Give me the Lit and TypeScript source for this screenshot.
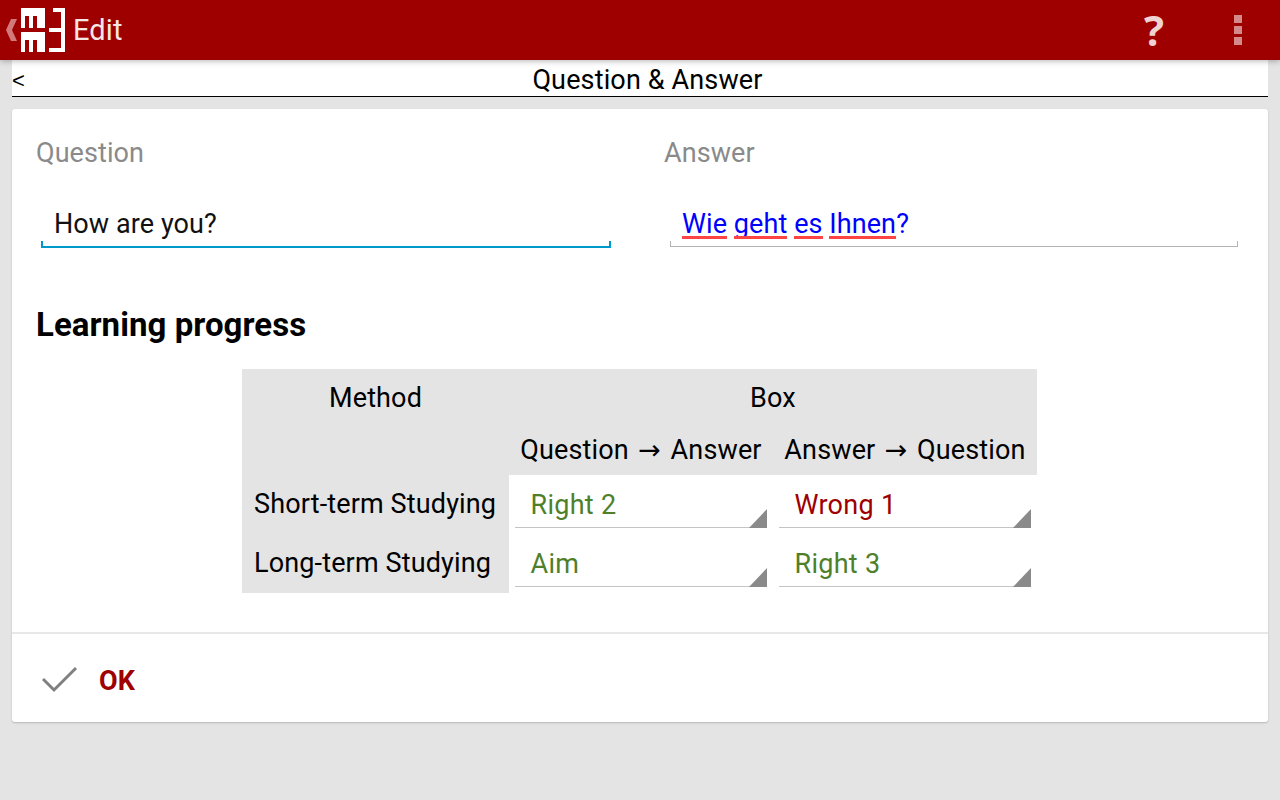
import { LitElement, html, css } from "lit";
import { customElement } from "lit/decorators.js";

@customElement("app-root")
export class AppRoot extends LitElement {
  static styles = css`
    :host { display: block; width: 1280px; height: 800px; background: #e4e4e4; font-family: Roboto, "Noto Sans", sans-serif; overflow: hidden; color: #000; letter-spacing: .14px; }
    .bar { height: 60px; background: #9e0000; display: flex; align-items: center; color: #f6e6e6; position: relative; z-index: 2; box-shadow: 0 1px 6px rgba(0,0,0,.3); }
    .back { width: 21px; height: 60px; flex: none; display: block; }
    .logo { width: 44px; height: 44px; flex: none; display: block; }
    .title { font-size: 29px; margin-left: 8px; flex: 1; line-height: 64px; }
    .help { font-family: "Open Sans", sans-serif; font-weight: 700; font-size: 42px; color: #f0d2d2; width: 56px; text-align: center; margin-right: 52px; line-height: 60px; }
    .dots { width: 8px; margin-right: 38px; display: flex; flex-direction: column; gap: 3px; }
    .dots i { display: block; height: 8px; background: #d48a8a; }
    .sub { margin: 0 12px; padding: 4px 0 0 15px; height: 32px; background: #fff; border-bottom: 1px solid #000; position: relative; display: flex; align-items: center; justify-content: center; font-size: 27px; }
    .lt { position: absolute; left: 0; top: 3px; line-height: 36px; font-family: "Liberation Sans", sans-serif; font-size: 22px; }
    .card { margin: 12px 12px 0; height: 613px; background: #fff; border-radius: 3px; box-shadow: 0 1px 2px rgba(0,0,0,.2); display: flex; flex-direction: column; }
    .body { height: 523px; padding: 0 24px; border-bottom: 2px solid #e8e8e8; }
    .fields { display: grid; grid-template-columns: 628px 1fr; }
    .label { font-size: 27px; color: #8a8a8a; line-height: 32px; margin-top: 28px; letter-spacing: .08px; }
    .val { font-size: 27px; line-height: 32px; height: 32px; margin-top: 39px; padding-left: 18px; letter-spacing: .08px; }
    .q .val { color: #111; }
    .a .val { color: #0000ff; }
    .box { margin-top: 1px; box-sizing: border-box; }
    .q .box { margin-left: 5px; width: 570px; height: 7px; border: solid #0099cc; border-width: 0 2px 2px 2px; }
    .a .box { margin-left: 6px; width: 568px; height: 6px; border: solid #b4b4b4; border-width: 0 1px 1px 1px; }
    .w { display: inline-block; position: relative; }
    .w::after { content: ""; position: absolute; left: 0; right: 0; top: 28px; height: 3px; background: #ff4444; }
    h2 { font-size: 33px; font-weight: 700; margin: 57px 0 0; line-height: 40px; letter-spacing: .05px; }
    table { border-collapse: separate; border-spacing: 0; margin: 24px 0 0 206px; width: 795px; }
    th, .m { background: #e4e4e4; font-weight: 400; font-size: 27px; padding: 0; }
    th { height: 49px; text-align: center; padding-top: 4px; }
    tr.h2r th { height: 51px; padding-top: 2px; }
    .arr { font-family: "DejaVu Sans", sans-serif; display: inline-block; width: 28px; text-align: center; line-height: 1; }
    .m { text-align: left; padding-left: 12px; height: 59px; width: 255px; }
    .m span { position: relative; top: -1px; }
    td.s { padding: 0 6px; height: 59px; vertical-align: top; }
    .sel { height: 53px; border-bottom: 1px solid #c4c4c4; position: relative; box-sizing: border-box; font-size: 27px; padding-left: 15.5px; line-height: 60px; letter-spacing: .28px; }
    .sel svg { position: absolute; right: 0; bottom: -1px; width: 18px; height: 19px; display: block; }
    .g { color: #507f2a; }
    .r { color: #9e0000; }
    .ok { flex: 1; display: flex; align-items: center; padding: 4px 0 0 30px; }
    .ok svg { width: 36px; height: 30px; display: block; }
    .ok b { color: #9e0000; font-size: 27px; margin: 2px 0 0 21px; font-weight: 700; }
  `;

  sel(text: string, cls: string) {
    return html`<td class="s"><div class="sel ${cls}">${text}<svg viewBox="0 0 18 19"><polygon points="18,0 18,19 0,19" fill="#8a8a8a"/></svg></div></td>`;
  }

  render() {
    return html`
      <div class="bar">
        <svg class="back" viewBox="0 0 21 60"><polygon points="11,19 17,19 12,30 17,41 11,41 6,30" fill="#d27a7a"/></svg>
        <svg class="logo" viewBox="0 0 44 44" fill="#fff" shape-rendering="crispEdges">
          <path fill-rule="evenodd" d="M0 0H24V20H0ZM4 8V20H8V8ZM12 8V20H16V8Z"/>
          <path fill-rule="evenodd" d="M0 24H24V44H0ZM4 32V44H8V32ZM12 32V44H16V32Z"/>
          <path d="M32 0H44V44H28V40H40V24H28V20H40V4H32Z"/>
        </svg>
        <div class="title">Edit</div>
        <div class="help">?</div>
        <div class="dots"><i></i><i></i><i></i></div>
      </div>
      <div class="sub"><span class="lt">&lt;</span>Question &amp; Answer</div>
      <div class="card">
        <div class="body">
          <div class="fields">
            <div class="q">
              <div class="label">Question</div>
              <div class="val">How are you?</div>
              <div class="box"></div>
            </div>
            <div class="a">
              <div class="label">Answer</div>
              <div class="val"><span class="w">Wie</span> <span class="w">geht</span> <span class="w">es</span> <span class="w">Ihnen</span>?</div>
              <div class="box"></div>
            </div>
          </div>
          <h2>Learning progress</h2>
          <table>
            <tr><th>Method</th><th colspan="2">Box</th></tr>
            <tr class="h2r"><th></th><th>Question <span class="arr">→</span> Answer</th><th>Answer <span class="arr">→</span> Question</th></tr>
            <tr><td class="m"><span>Short-term Studying</span></td>${this.sel("Right 2", "g")}${this.sel("Wrong 1", "r")}</tr>
            <tr><td class="m"><span>Long-term Studying</span></td>${this.sel("Aim", "g")}${this.sel("Right 3", "g")}</tr>
          </table>
        </div>
        <div class="ok">
          <svg viewBox="0 0 36 30"><path d="M1 14L12 25L34 3" fill="none" stroke="#808080" stroke-width="3"/></svg>
          <b>OK</b>
        </div>
      </div>
    `;
  }
}
